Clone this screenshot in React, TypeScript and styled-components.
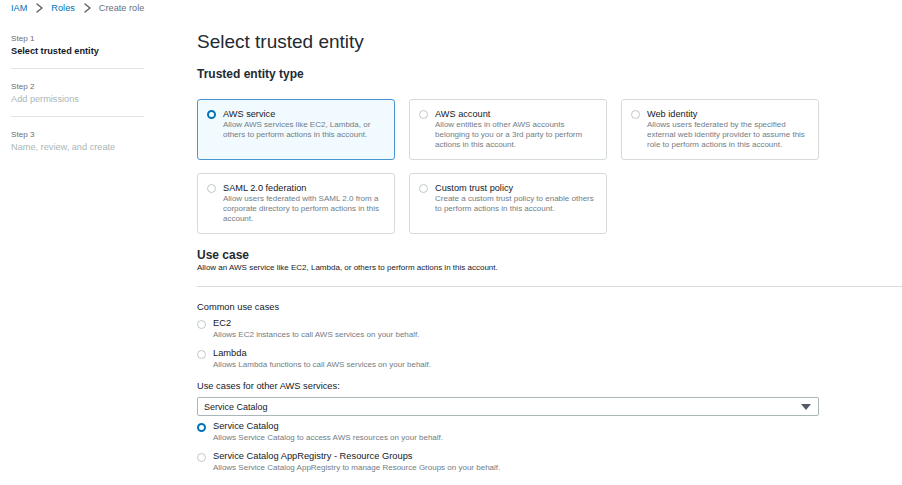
import React from "react";
import styled, { createGlobalStyle } from "styled-components";

const GlobalStyle = createGlobalStyle`
  html, body {
    margin: 0;
    padding: 0;
    background: #ffffff;
  }
  body {
    font-family: "Liberation Sans", Arial, Helvetica, sans-serif;
    color: #16191f;
    -webkit-font-smoothing: antialiased;
  }
  * { box-sizing: border-box; }
`;

const Page = styled.div`
  padding-left: 11px;
  width: 902px;
  overflow: hidden;
`;

const Breadcrumbs = styled.nav`
  display: flex;
  align-items: center;
  height: 16px;
  font-size: 9.2px;
  line-height: 16px;
`;

const Crumb = styled.span<{ $link?: boolean }>`
  color: ${(p) => (p.$link ? "#0073bb" : "#687078")};
`;

const ChevronWrap = styled.span`
  display: inline-flex;
  align-items: center;
  margin: 0 8px 0 9px;
`;

const Layout = styled.div`
  display: flex;
  align-items: flex-start;
`;

const Sidebar = styled.aside`
  width: 133px;
  flex: 0 0 133px;
  padding-top: 16px;
  display: flex;
  flex-direction: column;
`;

const StepBlock = styled.div`
  display: flex;
  flex-direction: column;
`;

const StepLabel = styled.div`
  font-size: 8.1px;
  line-height: 13px;
  color: #687078;
`;

const StepName = styled.div<{ $active?: boolean }>`
  font-size: 9.2px;
  line-height: 13px;
  font-weight: ${(p) => (p.$active ? 700 : 400)};
  color: ${(p) => (p.$active ? "#16191f" : "#aab7b8")};
`;

const StepDivider = styled.hr`
  border: 0;
  border-top: 1px solid #e3e6e6;
  margin: 10px 0 11px;
  height: 0;
`;

const Main = styled.main`
  flex: 1;
  margin-left: 53px;
  padding-top: 14px;
  display: flex;
  flex-direction: column;
`;

const Title = styled.h1`
  margin: 0;
  font-size: 19px;
  line-height: 24px;
  font-weight: 400;
  color: #232a31;
`;

const SectionHeading = styled.h2<{ $top: number }>`
  margin: ${(p) => p.$top}px 0 0;
  font-size: 12px;
  line-height: ${(p) => (p.$top === 12 ? 16 : 14)}px;
  font-weight: 700;
  color: #232a31;
`;

const SectionDesc = styled.div`
  margin-top: 1px;
  font-size: 8px;
  line-height: 10px;
  color: #16191f;
`;

const TileGrid = styled.div`
  margin-top: 17px;
  display: grid;
  grid-template-columns: repeat(3, 198px);
  column-gap: 14px;
  row-gap: 13px;
  width: 622px;
`;

const Tile = styled.div<{ $selected?: boolean }>`
  display: flex;
  gap: 7px;
  padding: 8px 8px 9px 9px;
  min-height: 61px;
  border: 1px solid ${(p) => (p.$selected ? "#4a94d4" : "#d5dbdb")};
  border-radius: 3px;
  background: ${(p) => (p.$selected ? "#f1faff" : "#ffffff")};
`;

const Radio = styled.span<{ $checked?: boolean }>`
  flex: 0 0 9px;
  width: 9px;
  height: 9px;
  margin-top: 1.5px;
  border-radius: 50%;
  background: #ffffff;
  border: ${(p) => (p.$checked ? "2.8px solid #0073bb" : "1px solid #c0c8c9")};
`;

const TileText = styled.div`
  display: flex;
  flex-direction: column;
  min-width: 0;
`;

const TileTitle = styled.div`
  font-size: 9.2px;
  line-height: 12px;
  color: #16191f;
`;

const TileDesc = styled.div`
  font-size: 8px;
  line-height: 10px;
  color: #727c85;
`;

const Divider = styled.hr`
  margin: 13px 0 0;
  border: 0;
  border-top: 1px solid #d5dbdb;
  height: 0;
  width: 100%;
`;

const FieldLabel = styled.div<{ $top: number }>`
  margin-top: ${(p) => p.$top}px;
  font-size: 9.3px;
  line-height: 12px;
  color: #16191f;
`;

const Option = styled.div<{ $top: number }>`
  margin-top: ${(p) => p.$top}px;
  display: flex;
  gap: 7px;
`;

const OptionTitle = styled.div`
  font-size: 9.3px;
  line-height: 11px;
  color: #16191f;
`;

const OptionDesc = styled.div`
  margin-top: 1px;
  font-size: 8px;
  line-height: 10px;
  color: #727c85;
`;

const SelectBox = styled.div`
  margin-top: 5px;
  width: 622px;
  height: 19px;
  border: 1px solid #aab7b8;
  border-radius: 2px;
  display: flex;
  align-items: center;
  justify-content: space-between;
  padding: 0 7px 0 6px;
  font-size: 9px;
  color: #16191f;
`;

const Caret = styled.span`
  width: 0;
  height: 0;
  border-left: 5.5px solid transparent;
  border-right: 5.5px solid transparent;
  border-top: 6px solid #545b64;
  margin-top: 1px;
`;

const Chevron = () => (
  <ChevronWrap>
    <svg width="7" height="10" viewBox="0 0 7 10" fill="none">
      <polyline points="1,1 6,5 1,9" stroke="#545b64" strokeWidth="1.3" strokeLinecap="round" strokeLinejoin="round" />
    </svg>
  </ChevronWrap>
);

const tiles = [
  { title: "AWS service", desc: "Allow AWS services like EC2, Lambda, or others to perform actions in this account.", selected: true },
  { title: "AWS account", desc: "Allow entities in other AWS accounts belonging to you or a 3rd party to perform actions in this account." },
  { title: "Web identity", desc: "Allows users federated by the specified external web identity provider to assume this role to perform actions in this account." },
  { title: "SAML 2.0 federation", desc: "Allow users federated with SAML 2.0 from a corporate directory to perform actions in this account." },
  { title: "Custom trust policy", desc: "Create a custom trust policy to enable others to perform actions in this account." },
];

const steps = [
  { label: "Step 1", name: "Select trusted entity", active: true },
  { label: "Step 2", name: "Add permissions" },
  { label: "Step 3", name: "Name, review, and create" },
];

export default function App() {
  return (
    <>
      <GlobalStyle />
      <Page>
        <Breadcrumbs>
          <Crumb $link>IAM</Crumb>
          <Chevron />
          <Crumb $link>Roles</Crumb>
          <Chevron />
          <Crumb>Create role</Crumb>
        </Breadcrumbs>
        <Layout>
          <Sidebar>
            {steps.map((s, i) => (
              <StepBlock key={s.label}>
                <StepLabel>{s.label}</StepLabel>
                <StepName $active={s.active}>{s.name}</StepName>
                {i < steps.length - 1 && <StepDivider />}
              </StepBlock>
            ))}
          </Sidebar>
          <Main>
            <Title>Select trusted entity</Title>
            <SectionHeading $top={12}>Trusted entity type</SectionHeading>
            <TileGrid>
              {tiles.map((t) => (
                <Tile key={t.title} $selected={t.selected}>
                  <Radio $checked={t.selected} />
                  <TileText>
                    <TileTitle>{t.title}</TileTitle>
                    <TileDesc>{t.desc}</TileDesc>
                  </TileText>
                </Tile>
              ))}
            </TileGrid>
            <SectionHeading $top={14}>Use case</SectionHeading>
            <SectionDesc>Allow an AWS service like EC2, Lambda, or others to perform actions in this account.</SectionDesc>
            <Divider />
            <FieldLabel $top={14}>Common use cases</FieldLabel>
            <Option $top={5}>
              <Radio />
              <TileText>
                <OptionTitle>EC2</OptionTitle>
                <OptionDesc>Allows EC2 instances to call AWS services on your behalf.</OptionDesc>
              </TileText>
            </Option>
            <Option $top={8}>
              <Radio />
              <TileText>
                <OptionTitle>Lambda</OptionTitle>
                <OptionDesc>Allows Lambda functions to call AWS services on your behalf.</OptionDesc>
              </TileText>
            </Option>
            <FieldLabel $top={10}>Use cases for other AWS services:</FieldLabel>
            <SelectBox>
              <span>Service Catalog</span>
              <Caret />
            </SelectBox>
            <Option $top={5}>
              <Radio $checked />
              <TileText>
                <OptionTitle>Service Catalog</OptionTitle>
                <OptionDesc>Allows Service Catalog to access AWS resources on your behalf.</OptionDesc>
              </TileText>
            </Option>
            <Option $top={8}>
              <Radio />
              <TileText>
                <OptionTitle>Service Catalog AppRegistry - Resource Groups</OptionTitle>
                <OptionDesc>Allows Service Catalog AppRegistry to manage Resource Groups on your behalf.</OptionDesc>
              </TileText>
            </Option>
          </Main>
        </Layout>
      </Page>
    </>
  );
}
